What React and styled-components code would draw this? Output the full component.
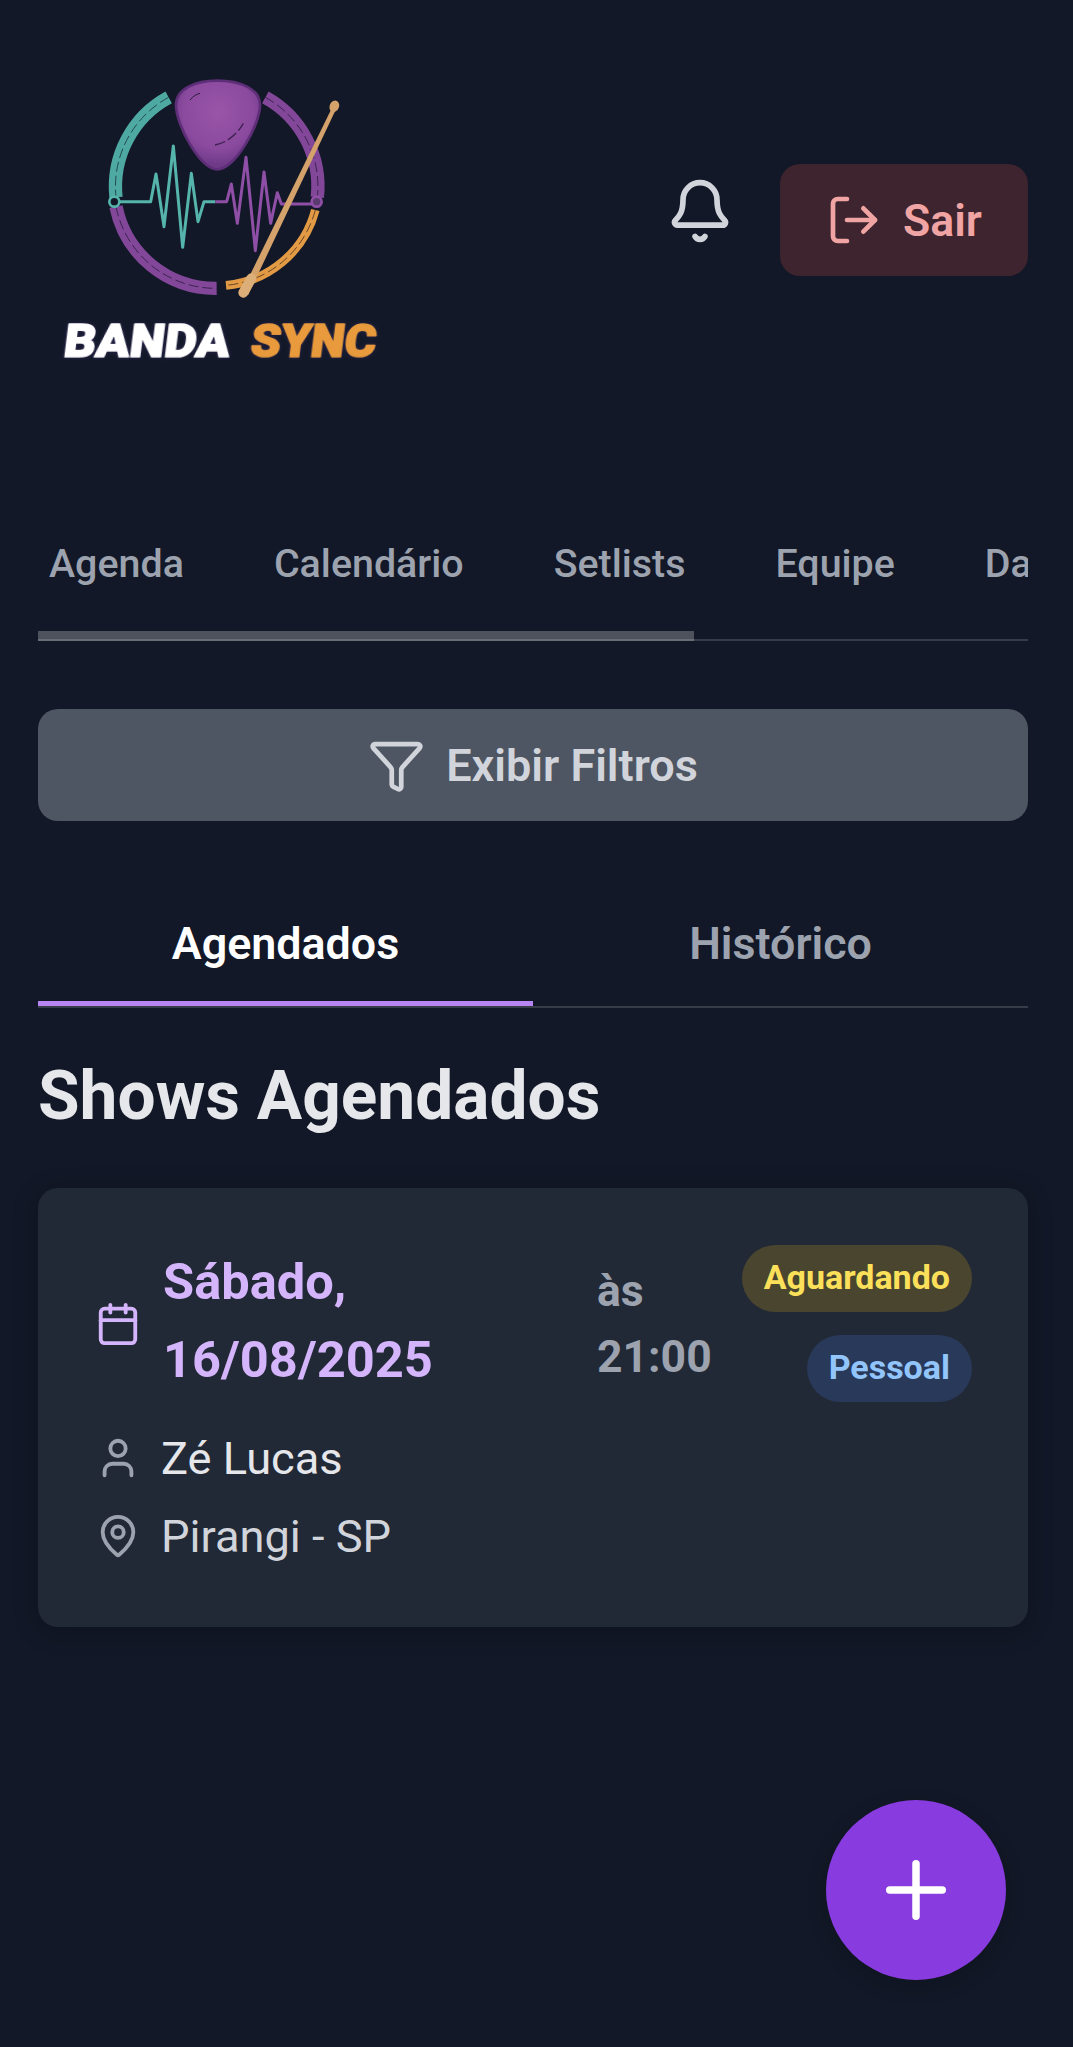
import React from "react";
import styled, { createGlobalStyle } from "styled-components";
import { Bell, Calendar, Funnel, LogOut, MapPin, Plus, User } from "lucide-react";

const GlobalStyle = createGlobalStyle`
  * {
    box-sizing: border-box;
  }
  html, body {
    margin: 0;
    background: #121827;
    font-family: Roboto, "Liberation Sans", sans-serif;
  }
`;

const tabs = ["Agenda", "Calendário", "Setlists", "Equipe", "Dashboard"];

function Logo() {
  return (
    <LogoSvg viewBox="24 0 1056 960">
      <defs>
        <radialGradient id="pick" cx="0.5" cy="0.35" r="0.6">
          <stop offset="0" stopColor="#9a55a8" />
          <stop offset="0.7" stopColor="#8a4a9e" />
          <stop offset="1" stopColor="#6f3a88" />
        </radialGradient>
      </defs>
      <g fill="none" strokeWidth="40">
        <path d="M416 112 A305 305 0 0 0 258 412" stroke="#4fa9a3" />
        <path d="M258 440 A305 305 0 0 0 560 685" stroke="#83479a" />
        <path d="M706 112 A305 305 0 0 1 862 412" stroke="#83479a" />
        <path d="M856 450 A305 305 0 0 1 588 676" stroke="#e39a45" strokeWidth="26" />
      </g>
      <g fill="none" strokeWidth="3" strokeDasharray="30 12">
        <path d="M416 112 A305 305 0 0 0 258 412" stroke="#1f4a4f" />
        <path d="M258 440 A305 305 0 0 0 560 685" stroke="#3a2350" />
        <path d="M706 112 A305 305 0 0 1 862 412" stroke="#3a2350" />
        <path d="M856 450 A305 305 0 0 1 588 676" stroke="#6a4526" />
      </g>
      <path
        d="M438 135 C438 85 498 62 562 62 C628 62 690 85 690 135 C690 195 615 328 562 328 C510 328 438 195 438 135 Z"
        fill="url(#pick)"
        stroke="#5e2f78"
        strokeWidth="8"
      />
      <path d="M480 120 C490 108 498 103 510 100" fill="none" stroke="#2b1c3c" strokeWidth="3" />
      <path d="M555 255 C590 248 620 225 640 190" fill="none" stroke="#3d2050" strokeWidth="4" strokeDasharray="32 10" />
      <path
        d="M262 425 H362 L378 342 L402 500 L430 258 L458 562 L484 340 L504 485 L522 425 H556"
        fill="none"
        stroke="#55b5ac"
        strokeWidth="9"
        strokeLinejoin="round"
      />
      <path
        d="M556 425 H590 L604 372 L622 490 L648 292 L676 572 L702 336 L722 490 L742 398 L754 432 H850"
        fill="none"
        stroke="#8f4fa6"
        strokeWidth="9"
        strokeLinejoin="round"
      />
      <circle cx="253" cy="425" r="15" fill="#121827" stroke="#55b5ac" strokeWidth="8" />
      <circle cx="860" cy="425" r="15" fill="#5b3a70" stroke="#8f4fa6" strokeWidth="8" />
      <path d="M634 698 L654 706 L918 148 L906 143 Z" fill="#d4a26a" />
      <path d="M640 698 L664 655" stroke="#dcae78" strokeWidth="30" strokeLinecap="round" />
      <ellipse cx="913" cy="139" rx="14" ry="18" fill="#d4a26a" transform="rotate(25 913 139)" />
      <LogoText x="207" y="890" transform="skewX(-7)" fill="#ffffff" stroke="#ffffff" textLength="497" lengthAdjust="spacingAndGlyphs">
        BANDA
      </LogoText>
      <LogoText x="767" y="890" transform="skewX(-7)" fill="#e89a3c" stroke="#e89a3c" textLength="376" lengthAdjust="spacingAndGlyphs">
        SYNC
      </LogoText>
    </LogoSvg>
  );
}

export default function App() {
  return (
    <Page>
      <GlobalStyle />
      <Header>
        <Logo />
        <HeaderActions>
          <BellButton>
            <Bell size={68} strokeWidth={2} />
          </BellButton>
          <ExitButton>
            <LogOut size={56} strokeWidth={2} />
            <ExitLabel>Sair</ExitLabel>
          </ExitButton>
        </HeaderActions>
      </Header>

      <TabBar>
        <TabScroll>
          {tabs.map((t) => (
            <Tab key={t}>{t}</Tab>
          ))}
        </TabScroll>
        <ScrollThumb />
      </TabBar>

      <FilterButton>
        <Funnel size={57} strokeWidth={2} />
        Exibir Filtros
      </FilterButton>

      <SubTabs>
        <SubTab $active>Agendados</SubTab>
        <SubTab>Histórico</SubTab>
      </SubTabs>

      <Title>Shows Agendados</Title>

      <Card>
        <CardTop>
          <DateBlock>
            <Calendar size={46} strokeWidth={2} />
            <DateText>
              Sábado,
              <br />
              16/08/2025
            </DateText>
          </DateBlock>
          <TimeText>
            às
            <br />
            21:00
          </TimeText>
          <Pills>
            <Pill $bg="#4a452f" $color="#fde05a">Aguardando</Pill>
            <Pill $bg="#29395a" $color="#93c5fd">Pessoal</Pill>
          </Pills>
        </CardTop>
        <InfoRow $color="#e5e7eb">
          <User size={46} strokeWidth={2} />
          Zé Lucas
        </InfoRow>
        <InfoRow $color="#d1d5db">
          <MapPin size={46} strokeWidth={2} />
          Pirangi - SP
        </InfoRow>
      </Card>

      <Fab>
        <Plus size={90} strokeWidth={2} />
      </Fab>
    </Page>
  );
}

const Page = styled.div`
  min-height: 2047px;
  padding: 60px 45px 0 38px;
  background: #121827;
`;

const Header = styled.header`
  display: flex;
  align-items: center;
  justify-content: space-between;
  height: 320px;
`;

const LogoSvg = styled.svg`
  width: 352px;
  height: 320px;
`;

const LogoText = styled.text`
  font-family: Roboto, sans-serif;
  font-size: 140px;
  font-weight: 900;
  stroke-width: 5px;
  stroke-linejoin: round;
  filter: drop-shadow(0 0 6px #2a2350);
`;

const HeaderActions = styled.div`
  display: flex;
  align-items: center;
  gap: 46px;
`;

const BellButton = styled.div`
  display: flex;
  margin-bottom: 18px;
  color: #d1d5db;
`;

const ExitButton = styled.div`
  display: flex;
  align-items: center;
  justify-content: center;
  gap: 21px;
  width: 248px;
  height: 112px;
  border-radius: 20px;
  background: #3d242e;
  color: #f0a4a4;
  font-size: 44.6px;
  font-weight: 600;
`;

const ExitLabel = styled.span`
  padding-top: 2px;
`;

const TabBar = styled.div`
  position: relative;
  margin-top: 140px;
  border-bottom: 2px solid #373c48;
`;

const TabScroll = styled.div`
  display: flex;
  gap: 90px;
  height: 119px;
  padding: 21px 0 0 11px;
  overflow: hidden;
  white-space: nowrap;
`;

const Tab = styled.div`
  color: #9ca3af;
  font-size: 39.4px;
  font-weight: 500;
  line-height: 46px;
`;

const ScrollThumb = styled.div`
  position: absolute;
  left: 0;
  bottom: -2px;
  width: 656px;
  height: 10px;
  background: rgba(255, 255, 255, 0.25);
`;

const FilterButton = styled.div`
  display: flex;
  align-items: center;
  justify-content: center;
  gap: 21px;
  height: 112px;
  margin-top: 68px;
  border-radius: 20px;
  background: #4f5663;
  color: #d1d5db;
  font-size: 45px;
  font-weight: 600;
`;

const SubTabs = styled.div`
  display: flex;
  margin-top: 70px;
  border-bottom: 2px solid #373c48;
`;

const SubTab = styled.div`
  flex: 1;
  height: 115px;
  padding-top: 28px;
  border-bottom: 5px solid ${(p) => (p.$active ? "#b784f3" : "transparent")};
  color: ${(p) => (p.$active ? "#ffffff" : "#9ca3af")};
  font-size: 44.8px;
  font-weight: 600;
  line-height: 50px;
  text-align: center;
`;

const Title = styled.h2`
  margin: 48px 0 0;
  color: #e5e7eb;
  font-size: 67.6px;
  font-weight: 700;
  line-height: 80px;
`;

const Card = styled.div`
  margin-top: 52px;
  padding: 57px 56px 52px 57px;
  border-radius: 20px;
  background: #222936;
  box-shadow: 0 4px 24px rgba(0, 0, 0, 0.25);
`;

const CardTop = styled.div`
  display: flex;
  align-items: center;
  margin-bottom: 17px;
`;

const DateBlock = styled.div`
  display: flex;
  align-items: center;
  gap: 22px;
  width: 502px;
  color: #d4b4fb;
`;

const DateText = styled.div`
  margin: -3px 0 3px;
  font-size: 50.6px;
  font-weight: 700;
  line-height: 78px;
`;

const TimeText = styled.div`
  color: #9ca3af;
  font-size: 44.5px;
  font-weight: 700;
  line-height: 66px;
`;

const Pills = styled.div`
  display: flex;
  flex-direction: column;
  align-items: flex-end;
  gap: 23px;
  margin-left: auto;
`;

const Pill = styled.div`
  height: 67px;
  padding: 0 22px;
  border-radius: 34px;
  background: ${(p) => p.$bg};
  color: ${(p) => p.$color};
  font-size: 34px;
  font-weight: 700;
  line-height: 65px;
`;

const InfoRow = styled.div`
  display: flex;
  align-items: center;
  gap: 20px;
  height: 78px;
  color: ${(p) => p.$color};
  font-size: 45.2px;

  svg {
    color: #9ca3af;
  }
`;

const Fab = styled.div`
  position: fixed;
  right: 67px;
  bottom: 67px;
  display: flex;
  align-items: center;
  justify-content: center;
  width: 180px;
  height: 180px;
  border-radius: 50%;
  background: #883cdf;
  color: #ffffff;
  box-shadow: 0 6px 20px rgba(0, 0, 0, 0.18);
`;
